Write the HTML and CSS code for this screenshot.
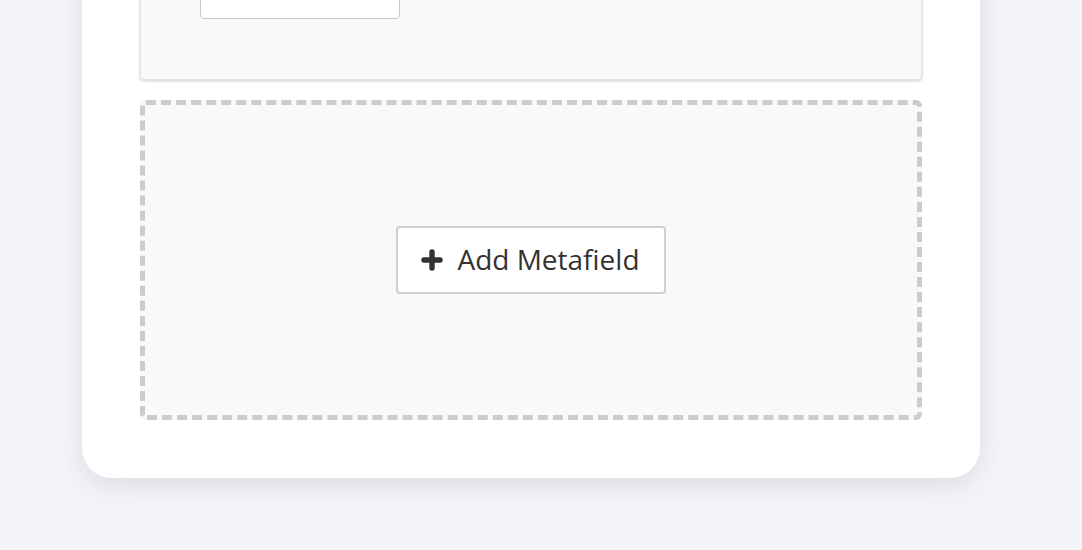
FILE: index.html
```html
<!DOCTYPE html>
<html lang="en">
<head>
  <meta charset="UTF-8" />
  <title>Metafields</title>
  <link rel="stylesheet" href="styles.css">
</head>
<body>
  <div class="page">
    <div class="card">
      <div class="field-panel">
        <input type="text" class="field-input" />
      </div>

      <div class="dropzone">
        <button class="add-btn" type="button">
          <svg class="plus" width="22" height="22" viewBox="0 0 22 22">
            <path d="M11 3v16M3 11h16" stroke="#333" stroke-width="5.5" stroke-linecap="round"/>
          </svg>
          <span>Add Metafield</span>
        </button>
      </div>
    </div>
  </div>
</body>
</html>
```

FILE: styles.css
```css
html, body {
  margin: 0;
  height: 100%;
}
body {
  background: #f4f5f8;
  font-family: "Open Sans", "Liberation Sans", sans-serif;
  color: #333;
  overflow: hidden;
}
.page {
  height: 100vh;
  display: flex;
  flex-direction: column;
  justify-content: flex-end;
  padding: 0 0 72px 82px;
  box-sizing: border-box;
}
.card {
  width: 898px;
  flex-shrink: 0;
  box-sizing: border-box;
  background: #fff;
  border-radius: 0 0 30px 30px;
  padding: 0 58px 58px 58px;
  box-shadow: 0 8px 28px rgba(40, 50, 80, 0.12);
}
.field-panel {
  background: #f9f9f9;
  border: 1px solid #e4e4e4;
  border-top: none;
  border-radius: 0 0 4px 4px;
  box-shadow: 0 1px 3px rgba(0, 0, 0, 0.2);
  padding: 40px 59px 60px 59px;
}
.field-input {
  display: block;
  width: 200px;
  height: 60px;
  box-sizing: border-box;
  border: 1px solid #c8c8c8;
  border-radius: 4px;
  background: #fff;
  margin-top: -41px;
}
.dropzone {
  margin-top: 20px;
  height: 320px;
  box-sizing: border-box;
  border: 5px dashed #cccccc;
  border-radius: 6px;
  background: #f9f9f9;
  display: flex;
  align-items: center;
  justify-content: center;
}
.add-btn {
  display: flex;
  align-items: center;
  gap: 14px;
  height: 68px;
  padding: 0 24px 0 23px;
  background: #fff;
  border: 2px solid #cfcfcf;
  border-radius: 4px;
  font-family: "Open Sans", "Liberation Sans", sans-serif;
  font-size: 28px;
  color: #333;
  cursor: pointer;
}
.add-btn span {
  margin-top: -2px;
}
.plus {
  display: block;
}
```
